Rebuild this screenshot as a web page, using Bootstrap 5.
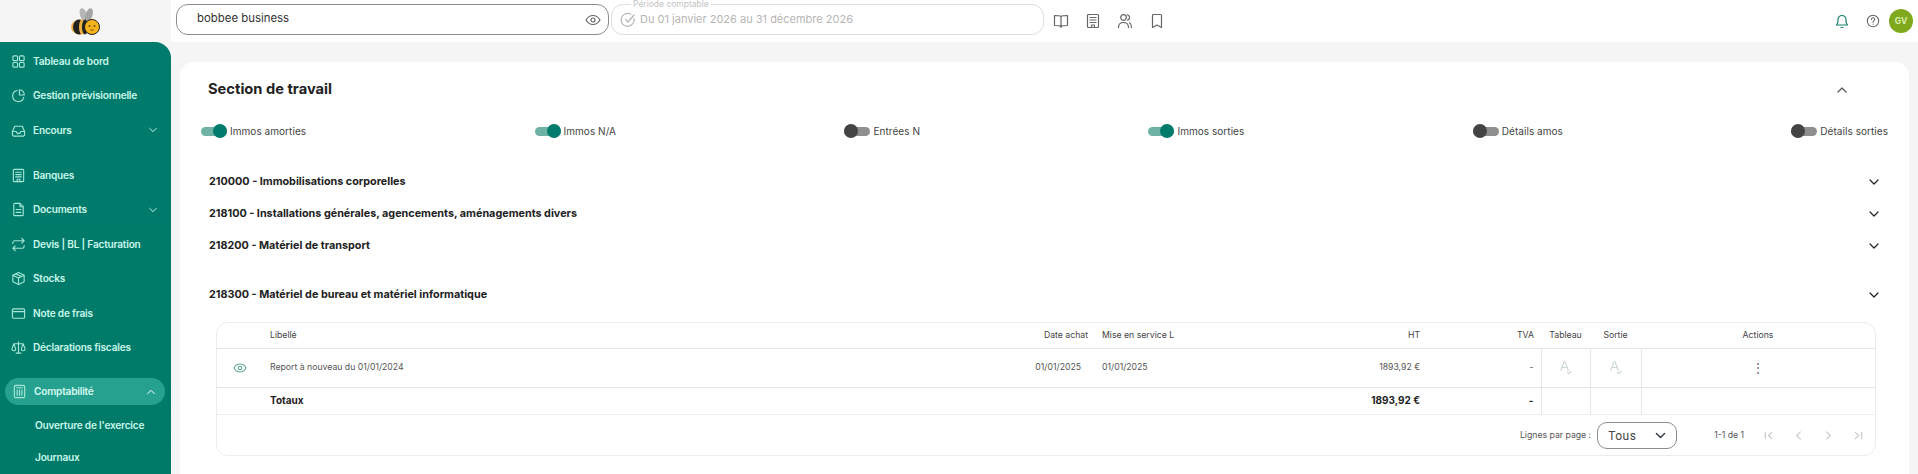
<!DOCTYPE html>
<html lang="fr">
<head>
    <meta charset="UTF-8">
    <meta name="viewport" content="width=device-width, initial-scale=1.0">
    <link href="https://cdn.jsdelivr.net/npm/bootstrap@5.3.0/dist/css/bootstrap.min.css" rel="stylesheet">
    <title>Section de travail</title>
    <style>
        html, body { height: 474px; overflow: hidden; }
        body { font-family: Inter, "Liberation Sans", sans-serif; background: #f5f5f5; color: #222; }
        svg.ic { fill: none; stroke: currentColor; stroke-width: 1.2; stroke-linecap: round; stroke-linejoin: round; flex: none; }

        .sidebar { width: 171px; flex: none; }
        .logo-box { height: 42px; }
        .side-nav { height: 432px; background: linear-gradient(180deg, #007b6c, #007a68); border-top-right-radius: 16px; padding-top: 2px; }
        .side-link { height: 34.5px; padding: 0 13px 0 11px; color: #c9f7ea; font-size: 10.1px; font-weight: 600; letter-spacing: -.2px; text-decoration: none; }
        .side-link svg.lead { width: 15px; height: 15px; margin-right: 7px; color: #a5e6d6; }
        .side-link .chev { margin-left: auto; width: 10px; height: 10px; }
        .side-gap { margin-top: 10.5px; }
        .side-link.active { height: 27px; margin: 13px 6px 0 5px; padding: 0 9px 0 7px; border-radius: 14px; background: #26a08f; color: #d5fbf0; }
        .side-link.active .chev { color: #fff; }
        .side-sub { height: 32px; padding-left: 35px; color: #c9f7ea; font-size: 10.1px; font-weight: 600; letter-spacing: -.2px; text-decoration: none; }
        .side-sub.first { margin-top: 5px; }

        .topbar { height: 42px; background: #fff; padding: 4px 5px 7px 5px; }
        .field { height: 31px; border-radius: 12px; font-size: 12px; width: 433px; }
        .field-main { border: 1px solid #8c8c8c; padding: 0 7px 0 20px; margin-right: 2px; }
        .field-main input { border: 0; outline: 0; padding: 0 0 2px 0; flex: 1; font-size: 11.4px; color: #333; background: transparent; }
        .field-period { border: 1px solid #ddd; padding: 0 0 0 8px; color: #b5b5b5; font-size: 11px; }
        .field-label { position: absolute; top: -6px; left: 19px; background: #fff; padding: 0 2px; font-size: 8.5px; line-height: 10px; color: #c4c4c4; }
        .top-icon { color: #666; width: 16px; height: 16px; }
        .top-tools { margin: 3px 0 0 9px; gap: 16px; }
        .top-right { margin-top: 3px; }
        .avatar { width: 24px; height: 24px; border-radius: 50%; background: #7fa81c; color: #d9eeb0; font-size: 8.5px; font-weight: 700; }

        .content { padding: 20px 9px 0 9px; }
        .work-card { height: 412px; background: #fff; border-radius: 14px 14px 0 0; padding: 0; }
        .work-head { height: 55px; padding: 0 61px 0 28px; }
        .work-head h1 { font-size: 14.7px; font-weight: 700; margin: 0; color: #222; }
        .toggles { padding: 0 21px 0 21px; height: 28px; }
        .toggle-item { font-size: 10px; color: #444; gap: 3px; margin: 0; padding: 0; min-height: 0; }
        .toggle-item .form-check-input { appearance: none; position: relative; float: none; margin: 0; width: 26px; height: 9px; border: 0; border-radius: 5px; background: #8f8f8f; box-shadow: none; }
        .toggle-item .form-check-input::after { content: ""; position: absolute; top: -2.5px; left: 0; width: 14px; height: 14px; border-radius: 50%; background: #444; }
        .toggle-item .form-check-input:checked { background: #6eb2a4; }
        .toggle-item .form-check-input:checked::after { left: 12px; background: #017b6c; }
        .toggle-item label { letter-spacing: .05px; }

        .acc-item { height: 32px; padding: 0 29px 0 29px; font-size: 10.8px; font-weight: 700; color: #222; background: #fff; border: 0; }
        .acc-list { margin-top: 21px; }
        .acc-open { margin-top: 17px; }
        .acc-item svg { width: 12px; height: 12px; color: #222; margin-left: auto; }

        .table-box { margin: 11px 33px 0 36px; height: 134px; border: 1px solid #ececec; border-radius: 12px; overflow: hidden; }
        .table-box table { table-layout: fixed; margin: 0; font-size: 8.7px; color: #555; }
        .table-box th, .table-box td { padding: 0 7px; vertical-align: middle; border-color: #e6e6e6; font-weight: 400; box-shadow: none; }
        .table-box thead th { height: 25px; color: #444; padding-bottom: 0; }
        .table-box tbody tr.data td { height: 39px; }
        .table-box tbody tr.total td { height: 27px; font-size: 10px; font-weight: 700; color: #222; border-top: 1px solid #e0e0e0; border-bottom: 1px solid #eee; }
        .table-box .vline { border-left: 1px solid #e6e6e6; }
        .date-v { padding-right: 14px !important; }
        .dots { color: #666; font-size: 12px; line-height: 1; }
        .sign { width: 15px; height: 15px; color: #c9d6d2; }
        .eye-row { color: #5fa593; width: 14px; height: 14px; }
        .tfoot-bar { height: 42px; padding-right: 11px; font-size: 8.7px; color: #555; }
        .rows-select { width: 80px; height: 27px; padding: 0 0 0 10px; margin: 0 37px 0 6px; border: 1px solid #8c8c8c; border-radius: 10px; font-family: Roboto, sans-serif; font-size: 12px; letter-spacing: .5px; color: #444; background-size: 11px; background-position: right 10px center; box-shadow: none; }
        .pager { gap: 19px; margin-left: 19px; }
        .pager svg { width: 11px; height: 11px; color: #c8c8c8; }
    </style>
</head>
<body>

<svg width="0" height="0" class="position-absolute">
    <defs>
        <symbol id="i-grid" viewBox="0 0 16 16"><rect x="2" y="2" width="5" height="5" rx="1"/><rect x="9" y="2" width="5" height="5" rx="1"/><rect x="2" y="9" width="5" height="5" rx="1"/><rect x="9" y="9" width="5" height="5" rx="1"/></symbol>
        <symbol id="i-pie" viewBox="0 0 16 16"><path d="M6.5 2.6A6 6 0 1 0 13.6 10"/><path d="M9 1.8A5.5 5.5 0 0 1 14.2 7.5H9z"/></symbol>
        <symbol id="i-inbox" viewBox="0 0 16 16"><path d="M1.5 9v3.5a1.5 1.5 0 0 0 1.5 1.5h10a1.5 1.5 0 0 0 1.5-1.5V9L12 3.5H4z"/><path d="M1.5 9h4l1 2h3l1-2h4"/></symbol>
        <symbol id="i-building" viewBox="0 0 16 16"><rect x="2.5" y="1.5" width="11" height="13" rx="1"/><path d="M5 4.500h6M5 7h6M5 9.500h6M6.500 14.500v-2.500h3v2.500"/></symbol>
        <symbol id="i-doc" viewBox="0 0 16 16"><path d="M9.500 1.500H4a1 1 0 0 0-1 1v11a1 1 0 0 0 1 1h8a1 1 0 0 0 1-1V5z"/><path d="M9.500 1.500V5H13M5.500 8h5M5.500 11h5"/></symbol>
        <symbol id="i-repeat" viewBox="0 0 16 16"><path d="M2 7V6a2 2 0 0 1 2-2h10M11.500 1.500 14 4l-2.500 2.500M14 9v1a2 2 0 0 1-2 2H2M4.500 14.500 2 12l2.500-2.500"/></symbol>
        <symbol id="i-box" viewBox="0 0 16 16"><path d="M8 1.500 14 4.500v7L8 14.500 2 11.500v-7z"/><path d="M2 4.500 8 7.500l6-3M8 7.500v7M5 3l6 3"/></symbol>
        <symbol id="i-card" viewBox="0 0 16 16"><rect x="1.500" y="3" width="13" height="10" rx="1"/><path d="M1.500 6h13"/></symbol>
        <symbol id="i-scale" viewBox="0 0 16 16"><path d="M8 2v12M5.500 14h5M3 4h10M3 4 1 9.500a2 2 0 0 0 4 0zM13 4l-2 5.500a2 2 0 0 0 4 0z"/></symbol>
        <symbol id="i-calc" viewBox="0 0 16 16"><rect x="2.500" y="1.500" width="11" height="13" rx="1.500"/><path d="M5 4h6M5.500 6.500v5.500M8 6.500v5.500M10.500 6.500v5.500"/></symbol>
        <symbol id="i-down" viewBox="0 0 12 12"><path d="M2 4l4 4 4-4"/></symbol>
        <symbol id="i-up" viewBox="0 0 12 12"><path d="M2 8l4-4 4 4"/></symbol>
        <symbol id="i-eye" viewBox="0 0 16 16"><path d="M1 8c1.800-3 4.200-4.500 7-4.500S13.200 5 15 8c-1.800 3-4.200 4.500-7 4.500S2.800 11 1 8z"/><circle cx="8" cy="8" r="2"/></symbol>
        <symbol id="i-check" viewBox="0 0 16 16"><path d="M14 6.500A6.500 6.500 0 1 1 10.500 2"/><path d="M5.500 7.500 8 10l6-7"/></symbol>
        <symbol id="i-book" viewBox="0 0 16 16"><path d="M8 3.500C6.500 2.500 4 2.500 1.500 2.500v10c2.500 0 5 0 6.500 1 1.500-1 4-1 6.500-1v-10c-2.500 0-5 0-6.500 1zM8 3.500v11"/></symbol>
        <symbol id="i-users" viewBox="0 0 16 16"><circle cx="6.500" cy="4.500" r="2.800"/><path d="M1.500 14.500c0-3 2-5 5-5s5 2 5 5M10.500 1.800a2.800 2.800 0 0 1 0 5.400M12.500 9.800c1.300.8 2 2.500 2 4.700"/></symbol>
        <symbol id="i-mark" viewBox="0 0 16 16"><path d="M3.500 2.500a1 1 0 0 1 1-1h7a1 1 0 0 1 1 1v12L8 12l-4.500 2.500z"/></symbol>
        <symbol id="i-bell" viewBox="0 0 16 16"><path d="M2.500 12h11c-1-1-1.500-2-1.500-4V6.500a4 4 0 0 0-8 0V8c0 2-.5 3-1.500 4zM7 14.500h2"/></symbol>
        <symbol id="i-help" viewBox="0 0 16 16"><circle cx="8" cy="8" r="6.500"/><path d="M6.200 6.200a1.900 1.900 0 1 1 2.800 1.700c-.7.400-1 .8-1 1.600M8 11.500v.1"/></symbol>
        <symbol id="i-sign" viewBox="0 0 16 16"><path d="M3 11 6.500 2h1L11 11M4.300 8h5.400M10 13l1.500 1.500L14 12"/></symbol>
        <symbol id="i-first" viewBox="0 0 12 12"><path d="M2.500 2.500v7M9.500 2.500 6 6l3.500 3.500"/></symbol>
        <symbol id="i-prev" viewBox="0 0 12 12"><path d="M8 2 4 6l4 4"/></symbol>
        <symbol id="i-next" viewBox="0 0 12 12"><path d="M4 2l4 4-4 4"/></symbol>
        <symbol id="i-last" viewBox="0 0 12 12"><path d="M9.500 2.500v7M2.500 2.500 6 6 2.500 9.500"/></symbol>
    </defs>
</svg>

<div class="d-flex">
    <aside class="sidebar">
        <div class="logo-box d-flex align-items-center justify-content-center">
            <svg width="34" height="30" viewBox="0 0 34 30">
                <ellipse cx="14.500" cy="9" rx="3.500" ry="7" fill="#b5b5b5" transform="rotate(-18 14.500 9)"/>
                <ellipse cx="20" cy="9" rx="3.500" ry="7" fill="#a5a5a5" transform="rotate(18 20 9)"/>
                <ellipse cx="11" cy="21" rx="9" ry="7.500" fill="#f0b040"/>
                <ellipse cx="10" cy="21" rx="6" ry="7.500" fill="#222"/>
                <ellipse cx="13" cy="21" rx="3" ry="7.500" fill="#f0b040"/>
                <ellipse cx="16" cy="21" rx="3" ry="7.500" fill="#222"/>
                <circle cx="23" cy="21" r="7.500" fill="#f5b21b" stroke="#222" stroke-width="1"/>
                <circle cx="20.500" cy="20" r="1" fill="#6b4a10"/><circle cx="25.500" cy="20" r="1" fill="#6b4a10"/>
                <path d="M21.500 24h3" stroke="#6b4a10" fill="none"/>
            </svg>
        </div>
        <nav class="side-nav nav flex-column">
            <a class="side-link d-flex align-items-center" href="#"><svg class="ic lead"><use href="#i-grid"/></svg>Tableau de bord</a>
            <a class="side-link d-flex align-items-center" href="#"><svg class="ic lead"><use href="#i-pie"/></svg>Gestion prévisionnelle</a>
            <a class="side-link d-flex align-items-center" href="#"><svg class="ic lead"><use href="#i-inbox"/></svg>Encours<svg class="ic chev"><use href="#i-down"/></svg></a>
            <a class="side-link side-gap d-flex align-items-center" href="#"><svg class="ic lead"><use href="#i-building"/></svg>Banques</a>
            <a class="side-link d-flex align-items-center" href="#"><svg class="ic lead"><use href="#i-doc"/></svg>Documents<svg class="ic chev"><use href="#i-down"/></svg></a>
            <a class="side-link d-flex align-items-center" href="#"><svg class="ic lead"><use href="#i-repeat"/></svg>Devis | BL | Facturation</a>
            <a class="side-link d-flex align-items-center" href="#"><svg class="ic lead"><use href="#i-box"/></svg>Stocks</a>
            <a class="side-link d-flex align-items-center" href="#"><svg class="ic lead"><use href="#i-card"/></svg>Note de frais</a>
            <a class="side-link d-flex align-items-center" href="#"><svg class="ic lead"><use href="#i-scale"/></svg>Déclarations fiscales</a>
            <a class="side-link active d-flex align-items-center" href="#"><svg class="ic lead"><use href="#i-calc"/></svg>Comptabilité<svg class="ic chev"><use href="#i-up"/></svg></a>
            <a class="side-sub first d-flex align-items-center" href="#">Ouverture de l'exercice</a>
            <a class="side-sub d-flex align-items-center" href="#">Journaux</a>
        </nav>
    </aside>

    <div class="flex-grow-1 d-flex flex-column">
        <header class="topbar d-flex align-items-center">
            <div class="field field-main d-flex align-items-center">
                <input type="text" value="bobbee business">
                <svg class="ic top-icon"><use href="#i-eye"/></svg>
            </div>
            <div class="field field-period position-relative d-flex align-items-center gap-1">
                <span class="field-label">Période comptable</span>
                <svg class="ic" width="16" height="16"><use href="#i-check"/></svg>
                <span>Du 01 janvier 2026 au 31 décembre 2026</span>
            </div>
            <div class="top-tools d-flex align-items-center">
                <svg class="ic top-icon"><use href="#i-book"/></svg>
                <svg class="ic top-icon"><use href="#i-building"/></svg>
                <svg class="ic top-icon"><use href="#i-users"/></svg>
                <svg class="ic top-icon"><use href="#i-mark"/></svg>
            </div>
            <div class="top-right ms-auto d-flex align-items-center">
                <svg class="ic me-3" width="16" height="16" style="color:#17806f"><use href="#i-bell"/></svg>
                <svg class="ic" width="14" height="14" style="color:#666;margin-right:9px"><use href="#i-help"/></svg>
                <div class="avatar d-flex align-items-center justify-content-center">GV</div>
            </div>
        </header>

        <main class="content">
            <section class="work-card">
                <div class="work-head d-flex align-items-center justify-content-between">
                    <h1>Section de travail</h1>
                    <svg class="ic" width="12" height="12" style="color:#555"><use href="#i-up"/></svg>
                </div>
                <div class="toggles d-flex align-items-center justify-content-between">
                    <div class="form-check toggle-item d-flex align-items-center"><input class="form-check-input" type="checkbox" id="t1" checked><label for="t1">Immos amorties</label></div>
                    <div class="form-check toggle-item d-flex align-items-center"><input class="form-check-input" type="checkbox" id="t2" checked><label for="t2">Immos N/A</label></div>
                    <div class="form-check toggle-item d-flex align-items-center"><input class="form-check-input" type="checkbox" id="t3"><label for="t3">Entrées N</label></div>
                    <div class="form-check toggle-item d-flex align-items-center"><input class="form-check-input" type="checkbox" id="t4" checked><label for="t4">Immos sorties</label></div>
                    <div class="form-check toggle-item d-flex align-items-center"><input class="form-check-input" type="checkbox" id="t5"><label for="t5">Détails amos</label></div>
                    <div class="form-check toggle-item d-flex align-items-center"><input class="form-check-input" type="checkbox" id="t6"><label for="t6">Détails sorties</label></div>
                </div>

                <div class="acc-list">
                    <div class="acc-item d-flex align-items-center">210000 - Immobilisations corporelles<svg class="ic"><use href="#i-down"/></svg></div>
                    <div class="acc-item d-flex align-items-center">218100 - Installations générales, agencements, aménagements divers<svg class="ic"><use href="#i-down"/></svg></div>
                    <div class="acc-item d-flex align-items-center">218200 - Matériel de transport<svg class="ic"><use href="#i-down"/></svg></div>
                    <div class="acc-item acc-open d-flex align-items-center">218300 - Matériel de bureau et matériel informatique<svg class="ic"><use href="#i-down"/></svg></div>
                </div>

                <div class="table-box">
                    <table class="table">
                        <colgroup>
                            <col style="width:46px"><col><col style="width:120px"><col style="width:124px"><col style="width:208px"><col style="width:114px"><col style="width:49px"><col style="width:51px"><col style="width:234px">
                        </colgroup>
                        <thead>
                            <tr>
                                <th></th><th>Libellé</th><th class="text-end">Date achat</th><th>Mise en service L</th><th class="text-end">HT</th><th class="text-end">TVA</th><th class="text-center">Tableau</th><th class="text-center">Sortie</th><th class="text-center">Actions</th>
                            </tr>
                        </thead>
                        <tbody>
                            <tr class="data">
                                <td class="text-center"><svg class="ic eye-row"><use href="#i-eye"/></svg></td>
                                <td>Report à nouveau du 01/01/2024</td>
                                <td class="text-end date-v">01/01/2025</td>
                                <td>01/01/2025</td>
                                <td class="text-end">1893,92 €</td>
                                <td class="text-end">-</td>
                                <td class="text-center vline"><svg class="ic sign"><use href="#i-sign"/></svg></td>
                                <td class="text-center vline"><svg class="ic sign"><use href="#i-sign"/></svg></td>
                                <td class="text-center vline dots">⋮</td>
                            </tr>
                            <tr class="total">
                                <td></td><td>Totaux</td><td></td><td></td>
                                <td class="text-end">1893,92 €</td>
                                <td class="text-end">-</td>
                                <td class="vline"></td><td class="vline"></td><td class="vline"></td>
                            </tr>
                        </tbody>
                    </table>
                    <div class="tfoot-bar d-flex align-items-center justify-content-end">
                        <span>Lignes par page :</span>
                        <select class="form-select rows-select"><option>Tous</option></select>
                        <span>1-1 de 1</span>
                        <div class="pager d-flex align-items-center">
                            <svg class="ic"><use href="#i-first"/></svg>
                            <svg class="ic"><use href="#i-prev"/></svg>
                            <svg class="ic"><use href="#i-next"/></svg>
                            <svg class="ic"><use href="#i-last"/></svg>
                        </div>
                    </div>
                </div>
            </section>
        </main>
    </div>
</div>

</body>
</html>
